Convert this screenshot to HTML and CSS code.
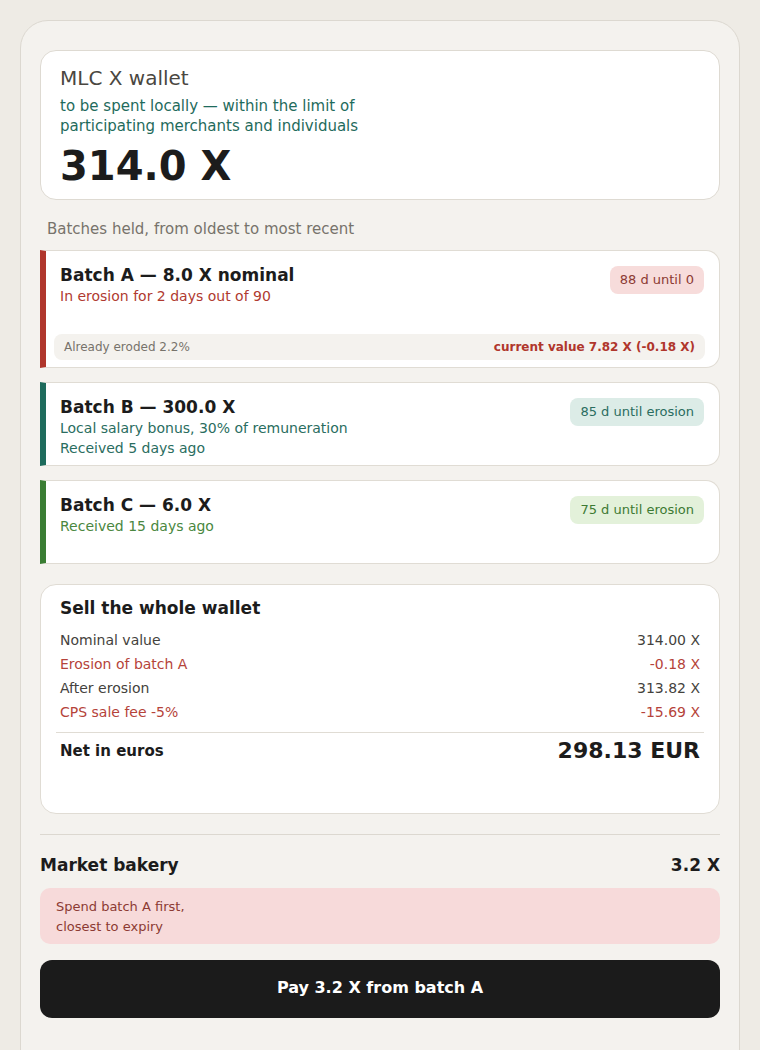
FILE: index.html
```html
<!DOCTYPE html>
<html lang="en">
<head>
<meta charset="utf-8">
<title>MLC X wallet</title>
<link rel="stylesheet" href="styles.css">
</head>
<body>
<div class="panel">
  <section class="wallet">
    <div class="wallet-title">MLC X wallet</div>
    <div class="wallet-sub">to be spent locally — within the limit of<br>participating merchants and individuals</div>
    <div class="wallet-amount">314.0 X</div>
  </section>

  <div class="section-label">Batches held, from oldest to most recent</div>

  <div class="batches">
    <article class="batch batch-a">
      <div class="batch-main">
        <div class="batch-info">
          <div class="batch-title">Batch A — 8.0 X nominal</div>
          <div class="batch-line">In erosion for 2 days out of 90</div>
        </div>
        <span class="badge">88 d until 0</span>
      </div>
      <div class="strip">
        <span class="strip-left">Already eroded 2.2%</span>
        <span class="strip-right">current value 7.82 X (-0.18 X)</span>
      </div>
    </article>

    <article class="batch batch-b">
      <div class="batch-main">
        <div class="batch-info">
          <div class="batch-title">Batch B — 300.0 X</div>
          <div class="batch-line">Local salary bonus, 30% of remuneration</div>
          <div class="batch-line">Received 5 days ago</div>
        </div>
        <span class="badge">85 d until erosion</span>
      </div>
    </article>

    <article class="batch batch-c">
      <div class="batch-main">
        <div class="batch-info">
          <div class="batch-title">Batch C — 6.0 X</div>
          <div class="batch-line">Received 15 days ago</div>
        </div>
        <span class="badge">75 d until erosion</span>
      </div>
    </article>
  </div>

  <section class="sell">
    <div class="sell-title">Sell the whole wallet</div>
    <div class="row"><span>Nominal value</span><span>314.00 X</span></div>
    <div class="row neg"><span>Erosion of batch A</span><span>-0.18 X</span></div>
    <div class="row"><span>After erosion</span><span>313.82 X</span></div>
    <div class="row neg"><span>CPS sale fee -5%</span><span>-15.69 X</span></div>
    <div class="total">
      <span class="total-label">Net in euros</span>
      <span class="total-value">298.13 EUR</span>
    </div>
  </section>

  <hr class="divider">

  <div class="merchant">
    <span>Market bakery</span>
    <span>3.2 X</span>
  </div>

  <div class="alert">Spend batch A first,<br>closest to expiry</div>

  <button class="pay" type="button">Pay 3.2 X from batch A</button>
</div>
</body>
</html>
```

FILE: styles.css
```css
* { box-sizing: border-box; }

html, body {
  margin: 0;
  padding: 0;
}

body {
  background: #eeebe5;
  font-family: "DejaVu Sans", "Noto Sans", sans-serif;
  color: #1c1c1c;
  padding: 20px 20px 0;
}

.panel {
  background: #f4f2ee;
  border: 1px solid #dcd8d0;
  border-radius: 28px;
  padding: 29px 19px 40px;
  min-height: 1060px;
}

.wallet {
  background: #ffffff;
  border: 1px solid #dedad2;
  border-radius: 16px;
  padding: 14px 19px 9px;
}

.wallet-title {
  font-size: 20px;
  line-height: 26px;
  color: #4a4741;
}

.wallet-sub {
  margin-top: 5px;
  font-size: 15px;
  line-height: 20px;
  color: #1f6b5c;
}

.wallet-amount {
  margin-top: 6px;
  font-size: 40px;
  line-height: 48px;
  font-weight: 700;
  color: #1c1c1c;
}

.section-label {
  margin: 18px 7px 10px;
  font-size: 15px;
  line-height: 22px;
  color: #77736b;
}

.batches {
  display: flex;
  flex-direction: column;
  gap: 14px;
}

.batch {
  background: #ffffff;
  border: 1px solid #e0dcd4;
  border-left: 6px solid #b0362c;
  border-radius: 0 14px 14px 0;
  min-height: 84px;
}

.batch-main {
  display: flex;
  justify-content: space-between;
  align-items: flex-start;
  padding: 13px 15px 7px 14px;
  min-height: 82px;
}

.batch-a .batch-main {
  min-height: 0;
  padding-bottom: 0;
}

.batch-a .batch-info {
  min-height: 61px;
}

.batch-title {
  font-size: 17px;
  line-height: 22px;
  font-weight: 700;
  color: #1c1c1c;
}

.batch-line {
  font-size: 14px;
  line-height: 20px;
}

.badge {
  margin-top: 2px;
  padding: 5px 10px;
  border-radius: 8px;
  font-size: 13px;
  line-height: 18px;
  white-space: nowrap;
}

.batch-a .batch-line { color: #b03a30; }
.batch-a .badge { background: #f7dcdb; color: #8c3a33; }

.batch-b { border-left-color: #1e6b5c; }
.batch-b .batch-line { color: #2a6d60; }
.batch-b .badge { background: #dcece7; color: #2a6d60; }

.batch-c { border-left-color: #3a7d33; }
.batch-c .batch-line { color: #4a8740; }
.batch-c .badge { background: #e3f1da; color: #3d7a33; }

.strip {
  display: flex;
  justify-content: space-between;
  align-items: center;
  margin: 9px 14px 7px 8px;
  height: 26px;
  padding: 0 10px;
  background: #f4f2ee;
  border-radius: 8px;
  font-size: 12px;
}

.strip-left { color: #77736b; }
.strip-right { color: #b0362c; font-weight: 700; }

.sell {
  margin-top: 20px;
  background: #ffffff;
  border: 1px solid #e0dcd4;
  border-radius: 16px;
  padding: 12px 15px 16px;
  min-height: 230px;
}

.sell-title {
  padding: 0 4px;
  font-size: 17px;
  line-height: 22px;
  font-weight: 700;
  margin-bottom: 9px;
}

.row {
  display: flex;
  justify-content: space-between;
  padding: 0 4px;
  font-size: 14px;
  line-height: 24px;
  color: #44423d;
}

.row.neg { color: #b5433a; }

.total {
  display: flex;
  justify-content: space-between;
  align-items: center;
  margin-top: 8px;
  border-top: 1px solid #e0dcd4;
  padding: 4px 4px 0;
}

.total-label {
  font-size: 15px;
  font-weight: 700;
}

.total-value {
  font-size: 22px;
  line-height: 28px;
  font-weight: 700;
}

.divider {
  margin: 20px 0 0;
  border: 0;
  border-top: 1px solid #dcd8d0;
  height: 0;
}

.merchant {
  display: flex;
  justify-content: space-between;
  margin-top: 19px;
  font-size: 17px;
  line-height: 22px;
  font-weight: 700;
}

.alert {
  margin-top: 12px;
  background: #f7dada;
  border-radius: 10px;
  padding: 9px 16px 7px;
  font-size: 13px;
  line-height: 20px;
  color: #8c3a33;
}

.pay {
  display: block;
  width: 100%;
  margin-top: 16px;
  height: 58px;
  padding: 0 0 4px;
  border: 0;
  border-radius: 12px;
  background: #1b1b1b;
  color: #ffffff;
  font-family: "DejaVu Sans", "Noto Sans", sans-serif;
  font-size: 16px;
  font-weight: 700;
}
```
